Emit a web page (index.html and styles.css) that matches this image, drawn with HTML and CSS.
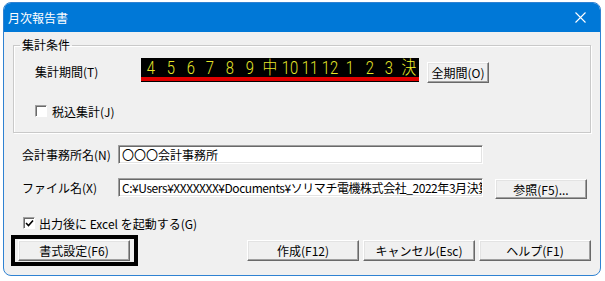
FILE: index.html
```html
<!DOCTYPE html>
<html lang="ja">
<head>
    <meta charset="UTF-8">
    <title>月次報告書</title>
    <link rel="stylesheet" href="styles.css">
</head>
<body>
    <div class="window">
        <div class="titlebar">
            <span class="title">月次報告書</span>
            <span class="close">
                <svg width="11" height="11" viewBox="0 0 11 11"><path d="M0.5 0.5 L10.5 10.5 M10.5 0.5 L0.5 10.5" stroke="#fff" stroke-width="1.1" fill="none"/></svg>
            </span>
        </div>

        <div class="content">
            <fieldset class="group">
                <legend>集計条件</legend>
                <div class="period-row">
                    <span class="period-label">集計期間(T)</span>
                    <div class="display">
                        <span>4</span><span>5</span><span>6</span><span>7</span><span>8</span><span>9</span><span>中</span>
                        <span>10</span><span>11</span><span>12</span><span>1</span><span>2</span><span>3</span><span class="kessan">決</span>
                    </div>
                    <div class="btn btn-all">全期間(O)</div>
                </div>
                <div class="check-row tax">
                    <span class="checkbox"></span>
                    <span>税込集計(J)</span>
                </div>
            </fieldset>

            <div class="field-row office">
                <span class="field-label">会計事務所名(N)</span>
                <div class="textbox">〇〇〇会計事務所</div>
            </div>

            <div class="field-row file">
                <span class="field-label">ファイル名(X)</span>
                <div class="textbox path">C:¥Users¥XXXXXXX¥Documents¥ソリマチ電機株式会社_2022年3月決算</div>
                <div class="btn btn-browse">参照(F5)...</div>
            </div>

            <div class="check-row excel">
                <span class="checkbox checked">
                    <svg width="9" height="9" viewBox="0 0 9 9"><path d="M1 4 L3.5 6.5 L8 1.5" stroke="#000" stroke-width="1.6" fill="none"/></svg>
                </span>
                <span>出力後に Excel を起動する(G)</span>
            </div>

            <div class="button-row">
                <div class="highlight">
                    <div class="btn btn-format">書式設定(F6)</div>
                </div>
                <div class="actions">
                    <div class="btn">作成(F12)</div>
                    <div class="btn">キャンセル(Esc)</div>
                    <div class="btn">ヘルプ(F1)</div>
                </div>
            </div>
        </div>
    </div>
</body>
</html>
```

FILE: styles.css
```css
body {
    margin: 0;
    background: #ffffff;
    font-family: "Noto Sans CJK JP", sans-serif;
    font-size: 12px;
    color: #000;
}

.window {
    margin: 2px 0 0 3px;
    width: 598px;
    height: 274px;
    box-sizing: border-box;
    border: 1px solid #2f82d2;
    border-radius: 8px;
    overflow: hidden;
    background: #f0f0f0;
}

.titlebar {
    height: 29px;
    background: #0078d7;
    color: #fff;
    display: flex;
    align-items: center;
    padding-left: 4px;
}
.title {
    flex: 1;
    line-height: 16px;
}
.close {
    width: 40px;
    display: flex;
    justify-content: center;
    align-items: center;
}

.content {
    padding: 0 9px 0 9px;
}

/* group box */
.group {
    margin: 5px 0 0 0;
    padding: 0 0 13px 0;
    border: 1px solid #c9c9c9;
    box-shadow: inset 1px 1px #fff, 1px 1px #fff;
    min-inline-size: 0;
}
.group legend {
    margin-left: 6px;
    padding: 0 2px;
    line-height: 16px;
}

.period-row {
    display: flex;
    align-items: flex-start;
    margin-top: 5px;
    padding-left: 21px;
}
.period-label {
    width: 106px;
    line-height: 24px;
    padding-top: 2px;
}
.display {
    width: 278px;
    height: 24px;
    display: flex;
    background: linear-gradient(to bottom, #000 19px, #e00000 19px, #e00000 23px, #000 23px);
    color: #e6e62a;
    font-family: Roboto, "Noto Sans CJK JP", sans-serif;
    font-weight: 300;
    font-size: 18px;
}
.display span {
    flex: 1;
    text-align: center;
    line-height: 19px;
    transform: scaleX(0.82);
}
.display .kessan {
    color: #f4f42c;
}

.btn {
    box-sizing: border-box;
    height: 21px;
    line-height: 19px;
    text-align: center;
    background: #f0f0f0;
    border: 1px solid;
    border-color: #fff #696969 #696969 #fff;
    box-shadow: inset -1px -1px #a0a0a0, inset 1px 1px #e3e3e3;
    white-space: nowrap;
}
.btn-all {
    width: 62px;
    margin: 4px 0 0 8px;
}

.check-row {
    display: flex;
    align-items: center;
    height: 16px;
}
.check-row.tax {
    margin-top: 19px;
    padding-left: 21px;
    gap: 5px;
}
.checkbox {
    box-sizing: border-box;
    width: 12px;
    height: 12px;
    background: #fff;
    border: 1px solid;
    border-color: #a0a0a0 #fff #fff #a0a0a0;
    box-shadow: inset 1px 1px #696969;
    display: flex;
    align-items: center;
    justify-content: center;
}

.field-row {
    display: flex;
    align-items: flex-start;
    padding-left: 9px;
}
.field-row.office {
    margin-top: 12px;
}
.field-row.file {
    margin-top: 14px;
}
.field-label {
    width: 96px;
    line-height: 19px;
}
.textbox {
    box-sizing: border-box;
    width: 365px;
    height: 19px;
    line-height: 17px;
    padding-left: 3px;
    background: #fff;
    border: 1px solid;
    border-color: #a0a0a0 #fff #fff #a0a0a0;
    box-shadow: inset 1px 1px #696969, inset -1px -1px #e3e3e3;
    white-space: nowrap;
    overflow: hidden;
}
.textbox.path {
    letter-spacing: -0.45px;
}
.btn-browse {
    width: 92px;
    height: 20px;
    margin: 1px 0 0 12px;
}

.check-row.excel {
    margin-top: 16px;
    padding-left: 10px;
    gap: 4px;
}

.button-row {
    display: flex;
    align-items: flex-start;
    margin-top: 4px;
}
.highlight {
    margin-left: -2px;
    border: 4px solid #000;
    padding: 1px 4px 1px 3px;
}
.btn-format {
    width: 112px;
}
.actions {
    margin: 5px 0 0 auto;
    display: flex;
    gap: 4px;
}
.actions .btn {
    width: 112px;
}
```
